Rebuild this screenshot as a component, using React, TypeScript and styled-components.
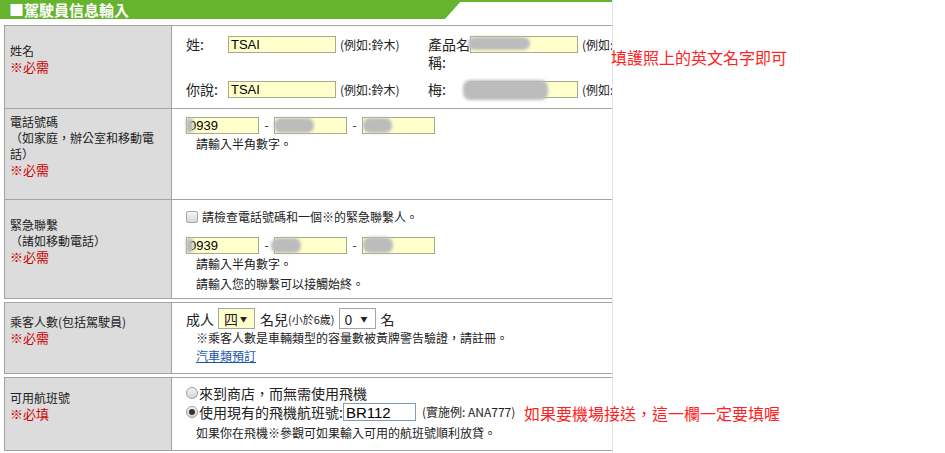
import styled, { createGlobalStyle } from "styled-components";

const GlobalStyle = createGlobalStyle`
  html, body {
    margin: 0;
    padding: 0;
    background: #fff;
  }
  body {
    font-family: "Noto Sans CJK TC", "Liberation Sans", sans-serif;
    color: #222;
  }
`;

const Page = styled.div`
  position: relative;
  width: 945px;
  height: 453px;
  overflow: hidden;
`;

const Frame = styled.div`
  width: 612px;
  height: 100%;
  overflow: hidden;
  border-right: 1px solid #e4e4e4;
`;

const Header = styled.div`
  height: 19px;
  background: linear-gradient(#65b32e, #65b32e) top left / 100% 2px no-repeat;
`;

const Title = styled.h2`
  margin: 0;
  width: 462px;
  height: 19px;
  padding-left: 9px;
  box-sizing: border-box;
  background: #65b32e;
  clip-path: polygon(0 0, 100% 0, calc(100% - 17px) 100%, 0 100%);
  color: #fff;
  font-size: 15px;
  font-weight: bold;
  line-height: 19px;
`;

const Sections = styled.div`
  margin: 6px 0 0 4px;
  width: 680px;
  display: flex;
  flex-direction: column;
  gap: 3px;
`;

const Section = styled.div`
  border: 1px solid #a3a3a3;
  border-bottom: none;
`;

const Row = styled.div<{ $h: number }>`
  display: grid;
  grid-template-columns: 167px 1fr;
  grid-template-rows: ${(p) => p.$h}px;
  height: ${(p) => p.$h}px;
  border-bottom: 1px solid #a3a3a3;
`;

const Label = styled.div`
  box-sizing: border-box;
  background: #dcdcdc;
  border-right: 1px solid #a3a3a3;
  padding: 4px 10px 20px 5px;
  display: flex;
  flex-direction: column;
  justify-content: center;
  font-size: 12px;
  line-height: 16px;
`;

const Required = styled.span`
  color: #cc0000;
  font-size: 13px;
`;

const Value = styled.div<{ $pt: number }>`
  padding: ${(p) => p.$pt}px 0 0 14px;
  font-size: 12px;
  line-height: 18px;
  overflow: hidden;
`;

const NameGrid = styled.div`
  display: grid;
  grid-template-columns: 42px 108px 92px 42px 108px auto;
  grid-template-rows: 45px 30px;
  align-items: start;
`;

const NameLabel = styled.span`
  font-size: 14px;
  line-height: 18px;
  margin-top: -1px;
`;

const Example = styled.span`
  padding-left: 4px;
  font-size: 12px;
  line-height: 17px;
  white-space: nowrap;
`;

const FieldWrap = styled.span`
  position: relative;
  display: inline-block;
`;

const TextBox = styled.input<{ $w: number; $plain?: boolean }>`
  box-sizing: border-box;
  display: block;
  width: ${(p) => p.$w}px;
  height: ${(p) => (p.$plain ? 18 : 17)}px;
  margin: 0;
  padding: 0 2px;
  border: 1px solid ${(p) => (p.$plain ? "#7f9db9" : "#a9a98e")};
  background: ${(p) => (p.$plain ? "#fff" : "#ffffcc")};
  font-family: "Liberation Sans", Arial, sans-serif;
  font-size: ${(p) => (p.$plain ? 15 : 13)}px;
  color: #000;
  outline: none;
`;

const Blob = styled.span<{ $l: number; $w: number; $t?: number; $h?: number }>`
  position: absolute;
  left: ${(p) => p.$l}px;
  top: ${(p) => p.$t ?? 1}px;
  width: ${(p) => p.$w}px;
  height: ${(p) => p.$h ?? 15}px;
  background: #bcbcbc;
  border-radius: 7px;
  filter: blur(1.5px);
  pointer-events: none;
`;

const PhoneLine = styled.div<{ $mt?: number }>`
  display: flex;
  align-items: center;
  margin-top: ${(p) => p.$mt ?? 0}px;
`;

const Dash = styled.span`
  width: 15px;
  text-align: center;
  font-size: 12px;
`;

const Hint = styled.div<{ $mt?: number }>`
  padding-left: 10px;
  margin-top: ${(p) => p.$mt ?? 0}px;
  font-size: 12px;
  line-height: 18px;
  white-space: nowrap;
`;

const CheckLine = styled.div`
  display: flex;
  align-items: center;
  gap: 4px;
  height: 18px;
  font-size: 12px;
  white-space: nowrap;
`;

const Checkbox = styled.span`
  box-sizing: border-box;
  width: 12px;
  height: 12px;
  border: 1px solid #a7a7a7;
  border-radius: 2px;
  background: linear-gradient(#f6f6f6, #d6d6d6);
`;

const PaxLine = styled.div`
  display: flex;
  align-items: center;
  height: 21px;
  font-size: 14px;
  white-space: nowrap;
`;

const Small = styled.span`
  font-size: 11px;
`;

const SelectBox = styled.span<{ $yellow?: boolean }>`
  box-sizing: border-box;
  display: inline-flex;
  align-items: center;
  width: 37px;
  height: 21px;
  margin: 0 5px 0 4px;
  padding-left: 5px;
  border: 1px solid #a5a5a5;
  background: ${(p) => (p.$yellow ? "#ffffcc" : "#fff")};
  font-size: 14px;
  &::after {
    content: "▼";
    font-size: 7px;
    margin-left: auto;
    margin-right: 7px;
  }
`;

const LinkLine = styled.a`
  display: inline-block;
  margin-left: 10px;
  font-size: 12px;
  line-height: 18px;
  color: #1a56a8;
  text-decoration: underline;
`;

const RadioLine = styled.div<{ $h: number }>`
  display: flex;
  align-items: center;
  height: ${(p) => p.$h}px;
  font-size: 14px;
  white-space: nowrap;
`;

const Radio = styled.span<{ $on?: boolean }>`
  box-sizing: border-box;
  position: relative;
  width: 12px;
  height: 12px;
  margin-right: 1px;
  border: 1px solid #a0a0a0;
  border-radius: 50%;
  background: linear-gradient(#f4f4f4, #d4d4d4);
  &::after {
    content: "";
    display: ${(p) => (p.$on ? "block" : "none")};
    position: absolute;
    left: 2px;
    top: 2px;
    width: 6px;
    height: 6px;
    border-radius: 50%;
    background: #333;
  }
`;

const FlightExample = styled.span`
  margin-left: 6px;
  font-size: 12px;
`;

const Annotation = styled.div<{ $x: number; $y: number }>`
  position: absolute;
  left: ${(p) => p.$x}px;
  top: ${(p) => p.$y}px;
  color: #ff2222;
  font-size: 16px;
  line-height: 18px;
  white-space: nowrap;
`;

function Field({ w, value, blob }: { w: number; value?: string; blob?: [number, number, number?, number?] }) {
  return (
    <FieldWrap>
      <TextBox $w={w} readOnly value={value ?? ""} />
      {blob && <Blob $l={blob[0]} $w={blob[1]} $t={blob[2]} $h={blob[3]} />}
    </FieldWrap>
  );
}

export default function App() {
  return (
    <Page>
      <GlobalStyle />
      <Frame>
        <Header>
          <Title>■駕駛員信息輸入</Title>
        </Header>
        <Sections>
          <Section>
            <Row $h={82}>
              <Label>
                <span>姓名</span>
                <Required>※必需</Required>
              </Label>
              <Value $pt={10}>
                <NameGrid>
                  <NameLabel>姓:</NameLabel>
                  <Field w={108} value="TSAI" />
                  <Example>(例如:鈴木)</Example>
                  <NameLabel>產品名稱:</NameLabel>
                  <Field w={108} blob={[-2, 62, 1, 13]} />
                  <Example>(例如:鈴木)</Example>
                  <NameLabel>你說:</NameLabel>
                  <Field w={108} value="TSAI" />
                  <Example>(例如:鈴木)</Example>
                  <NameLabel>梅:</NameLabel>
                  <Field w={108} blob={[-7, 85, -1, 20]} />
                  <Example>(例如:鈴木)</Example>
                </NameGrid>
              </Value>
            </Row>
            <Row $h={90}>
              <Label>
                <span>電話號碼</span>
                <span>（如家庭，辦公室和移動電話）</span>
                <Required>※必需</Required>
              </Label>
              <Value $pt={7}>
                <PhoneLine>
                  <Field w={73} value="0939" blob={[0, 7]} />
                  <Dash>-</Dash>
                  <Field w={73} blob={[0, 40]} />
                  <Dash>-</Dash>
                  <Field w={73} blob={[1, 29]} />
                </PhoneLine>
                <Hint $mt={1}>請輸入半角數字。</Hint>
              </Value>
            </Row>
            <Row $h={98}>
              <Label>
                <span>緊急聯繫</span>
                <span>（諸如移動電話）</span>
                <Required>※必需</Required>
              </Label>
              <Value $pt={8}>
                <CheckLine>
                  <Checkbox />
                  請檢查電話號碼和一個※的緊急聯繫人。
                </CheckLine>
                <PhoneLine $mt={10}>
                  <Field w={73} value="0939" blob={[0, 7]} />
                  <Dash>-</Dash>
                  <Field w={73} blob={[-3, 30]} />
                  <Dash>-</Dash>
                  <Field w={73} blob={[1, 30, 0, 16]} />
                </PhoneLine>
                <Hint $mt={1}>請輸入半角數字。</Hint>
                <Hint $mt={2}>請輸入您的聯繫可以接觸始終。</Hint>
              </Value>
            </Row>
          </Section>
          <Section>
            <Row $h={70}>
              <Label>
                <span>乘客人數(包括駕駛員)</span>
                <Required>※必需</Required>
              </Label>
              <Value $pt={5}>
                <PaxLine>
                  成人
                  <SelectBox $yellow>四</SelectBox>
                  名兒<Small>(小於6歲)</Small>
                  <SelectBox>0</SelectBox>
                  名
                </PaxLine>
                <Hint>※乘客人數是車輛類型的容量數被黃牌警告驗證，請註冊。</Hint>
                <LinkLine href="#">汽車類預訂</LinkLine>
              </Value>
            </Row>
          </Section>
          <Section>
            <Row $h={72}>
              <Label>
                <span>可用航班號</span>
                <Required>※必填</Required>
              </Label>
              <Value $pt={6}>
                <RadioLine $h={18}>
                  <Radio />
                  來到商店，而無需使用飛機
                </RadioLine>
                <RadioLine $h={20}>
                  <Radio $on />
                  使用現有的飛機航班號:
                  <TextBox $w={73} $plain readOnly value="BR112" />
                  <FlightExample>(實施例: ANA777)</FlightExample>
                </RadioLine>
                <Hint $mt={2}>如果你在飛機※參觀可如果輸入可用的航班號順利放貸。</Hint>
              </Value>
            </Row>
          </Section>
        </Sections>
      </Frame>
      <Annotation $x={611} $y={48}>填護照上的英文名字即可</Annotation>
      <Annotation $x={524} $y={404}>如果要機場接送，這一欄一定要填喔</Annotation>
    </Page>
  );
}
